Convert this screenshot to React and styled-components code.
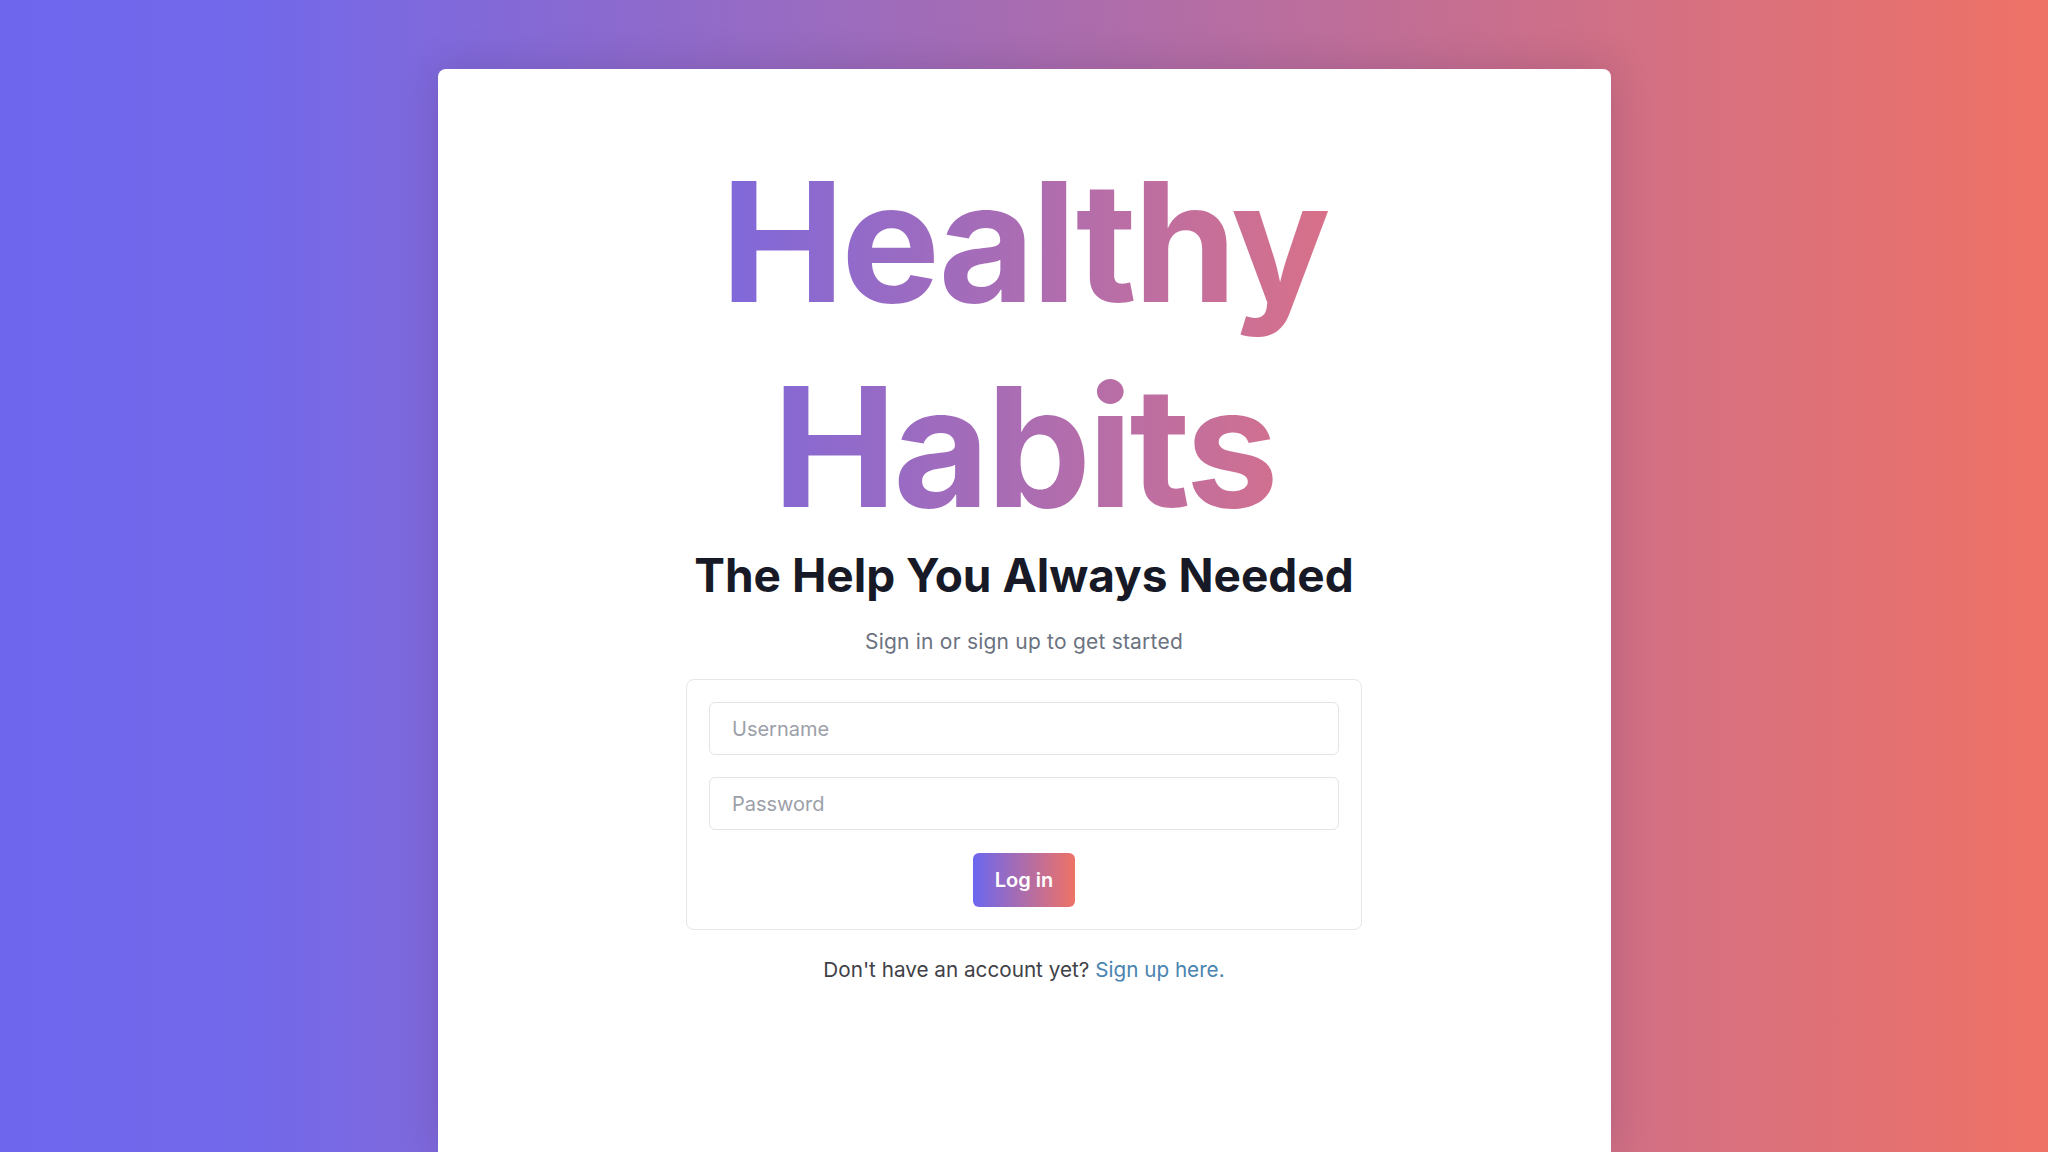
import styled, { createGlobalStyle } from 'styled-components';

const GlobalStyle = createGlobalStyle`
  html, body {
    margin: 0;
    padding: 0;
    height: 100%;
  }
  body {
    font-family: Inter, "Noto Sans", "Liberation Sans", sans-serif;
    background: linear-gradient(90deg, #6e67ee 0%, #7268ea 12%, #ef7266 100%);
    overflow: hidden;
  }
  * {
    box-sizing: border-box;
  }
`;

const Page = styled.div`
  display: flex;
  justify-content: center;
  min-height: 1152px;
  padding-top: 69px;
`;

const Card = styled.main`
  width: 1173px;
  min-height: 1083px;
  background: #ffffff;
  border-radius: 8px 8px 0 0;
  box-shadow: 0 0 40px rgba(40, 20, 60, 0.18);
  display: flex;
  flex-direction: column;
  align-items: center;
  padding-top: 70px;
`;

const Title = styled.h1`
  margin: 0;
  width: 100%;
  text-align: center;
  font-size: 166px;
  line-height: 205px;
  font-weight: 700;
  letter-spacing: -0.02em;
  background: linear-gradient(90deg, #6f67ea 15%, #e8727a 85%);
  -webkit-background-clip: text;
  background-clip: text;
  color: transparent;
`;

const Tagline = styled.h2`
  margin: 0;
  font-size: 46px;
  line-height: 53px;
  font-weight: 700;
  color: #171a26;
`;

const Lead = styled.p`
  margin: 25px 0 22px;
  font-size: 21px;
  line-height: 30px;
  letter-spacing: 0.01em;
  color: #6b7280;
`;

const Form = styled.form`
  width: 676px;
  border: 1px solid #e6e7ea;
  border-radius: 8px;
  padding: 22px;
  display: flex;
  flex-direction: column;
  align-items: center;
  gap: 22px;
`;

const Input = styled.input`
  width: 100%;
  height: 53px;
  border: 1px solid #e3e4e8;
  border-radius: 6px;
  padding: 0 22px;
  font-family: inherit;
  font-size: 20px;
  color: #1f2937;
  outline: none;

  &::placeholder {
    color: #9ca0a8;
  }
`;

const Button = styled.button`
  height: 54px;
  margin-top: 1px;
  padding: 0 22px;
  border: none;
  border-radius: 6px;
  background: linear-gradient(90deg, #6c67ef 0%, #ef7266 100%);
  color: #ffffff;
  font-family: inherit;
  font-size: 20px;
  font-weight: 600;
  cursor: pointer;
`;

const Footer = styled.p`
  margin: 25px 0 0;
  font-size: 20.7px;
  line-height: 30px;
  color: #3f4147;
`;

const Link = styled.a`
  color: #4a84b0;
  text-decoration: none;
`;

export default function App() {
  return (
    <>
      <GlobalStyle />
      <Page>
        <Card>
          <Title>
            Healthy
            <br />
            Habits
          </Title>
          <Tagline>The Help You Always Needed</Tagline>
          <Lead>Sign in or sign up to get started</Lead>
          <Form onSubmit={(e) => e.preventDefault()}>
            <Input type="text" placeholder="Username" />
            <Input type="password" placeholder="Password" />
            <Button type="submit">Log in</Button>
          </Form>
          <Footer>
            Don&apos;t have an account yet?
            {' '}
            <Link href="#signup">Sign up here.</Link>
          </Footer>
        </Card>
      </Page>
    </>
  );
}
